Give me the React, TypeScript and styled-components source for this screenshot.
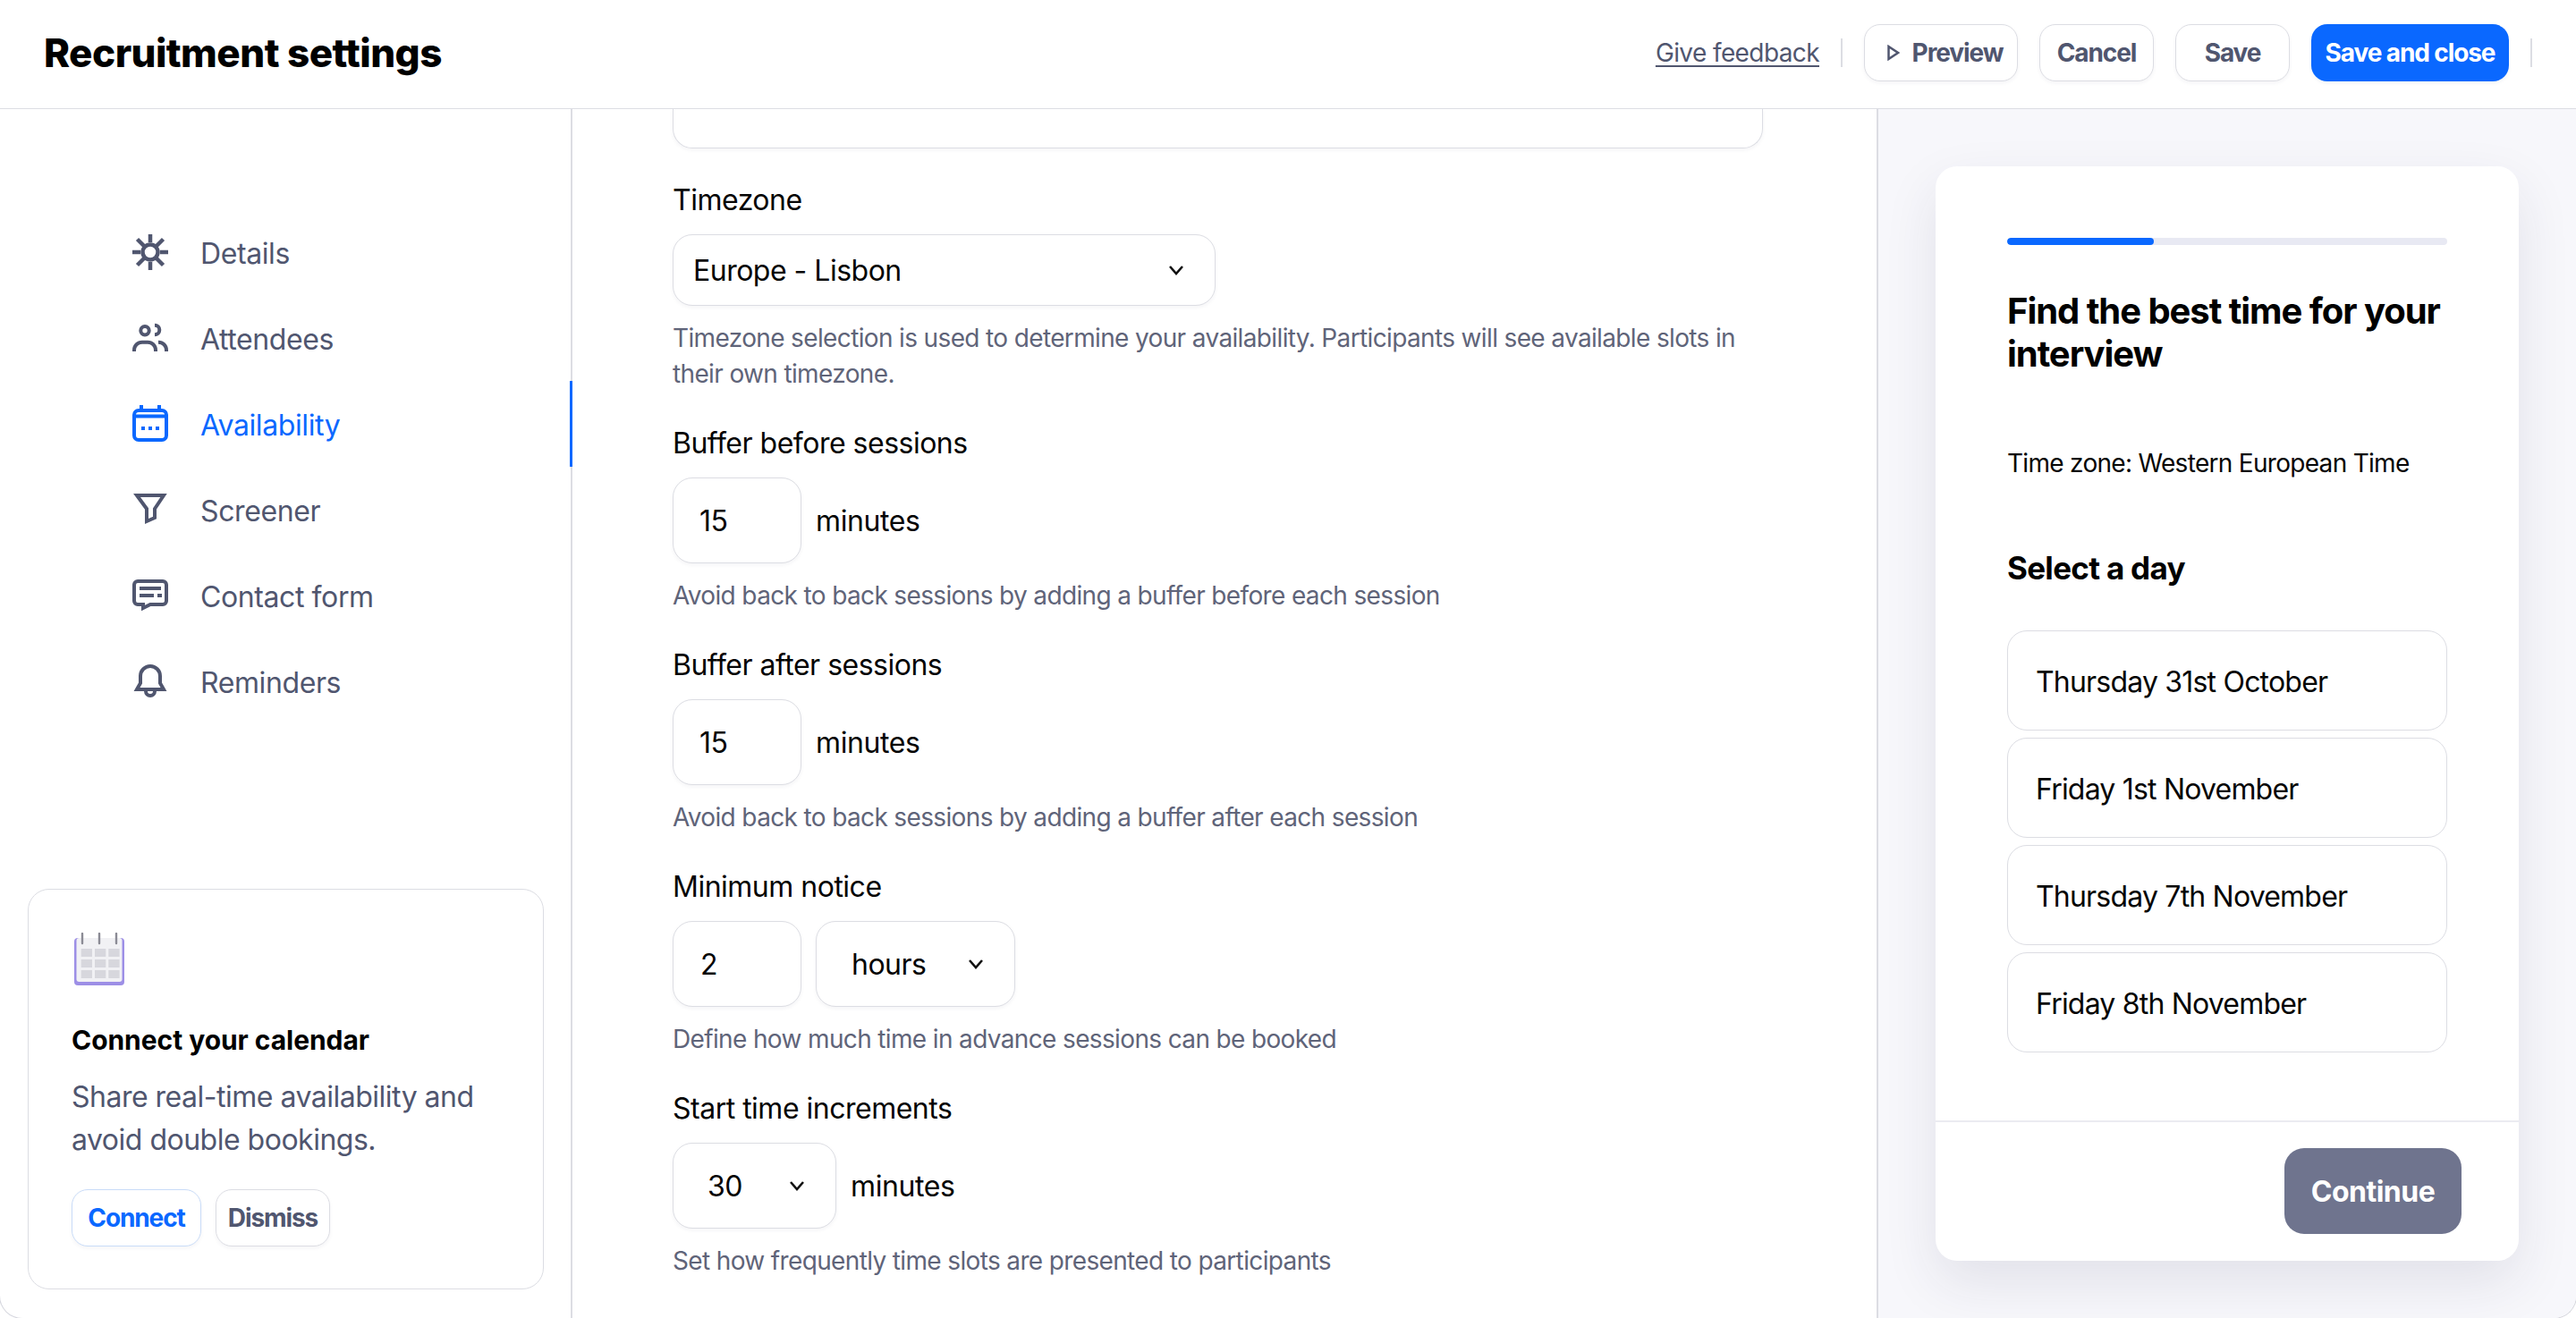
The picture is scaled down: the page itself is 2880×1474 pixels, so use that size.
import * as React from "react";
import styled, { createGlobalStyle } from "styled-components";

const FONT = `Inter, "Liberation Sans", sans-serif`;
const BLUE = "#0a68ff";
const SLATE = "#50566f";
const MUTED = "#5f6479";
const LINE = "#dcdde3";

const GlobalStyle = createGlobalStyle`
  html, body {
    margin: 0;
    height: 100%;
    overflow: hidden;
    background: #fff;
  }
  * {
    box-sizing: border-box;
  }
  body {
    font-family: ${FONT};
    color: #050505;
  }
`;

const Frame = styled.div`
  display: flex;
  flex-direction: column;
  height: calc(100vh + 1px);
  margin: 0 -1px;
  border: 1px solid #d6d7de;
  border-top: 0;
  border-radius: 0 0 26px 26px;
  overflow: hidden;
  background: #fff;
`;

const Header = styled.header`
  flex: none;
  display: flex;
  align-items: center;
  height: 122px;
  padding: 0 25px 4px 49px;
  border-bottom: 1px solid ${LINE};
`;

const Title = styled.h1`
  flex: 1;
  margin: 0;
  font-size: 44px;
  line-height: 56px;
  font-weight: 800;
  letter-spacing: -0.55px;
  color: #000;
`;

const FeedbackLink = styled.a`
  font-size: 28px;
  line-height: 36px;
  color: ${SLATE};
  text-decoration: underline;
  text-underline-offset: 4px;
  letter-spacing: -0.6px;
`;

const Divider = styled.span`
  width: 2px;
  height: 32px;
  margin: 0 24px;
  background: ${LINE};
`;

const Button = styled.button<{ $primary?: boolean; $w: number }>`
  display: flex;
  align-items: center;
  justify-content: center;
  gap: 14px;
  width: ${(p) => p.$w}px;
  height: 64px;
  padding: 0;
  border: ${(p) => (p.$primary ? "0" : `1.5px solid ${LINE}`)};
  border-radius: 18px;
  background: ${(p) => (p.$primary ? BLUE : "#fff")};
  box-shadow: 0 2px 4px rgba(40, 44, 80, 0.05);
  color: ${(p) => (p.$primary ? "#fff" : SLATE)};
  font-family: ${FONT};
  font-size: 28px;
  font-weight: 700;
  letter-spacing: -1.1px;
`;

const PreviewButton = styled(Button)`
  padding-left: 9px;
`;

const HeaderActions = styled.div`
  display: flex;
  align-items: center;
  gap: 24px;
`;

const Body = styled.div`
  flex: 1;
  display: flex;
  min-height: 0;
`;

const Sidebar = styled.aside`
  flex: none;
  display: flex;
  flex-direction: column;
  width: 640px;
  padding-top: 112px;
  border-right: 2px solid ${LINE};
`;

const NavList = styled.nav`
  display: flex;
  flex-direction: column;
`;

const NavRow = styled.a<{ $active?: boolean }>`
  position: relative;
  display: flex;
  align-items: center;
  gap: 36px;
  height: 96px;
  padding-left: 148px;
  font-size: 32px;
  letter-spacing: -0.4px;
  color: ${(p) => (p.$active ? BLUE : SLATE)};

  ${(p) =>
    p.$active &&
    `&::after {
      content: "";
      position: absolute;
      top: 0;
      right: -2px;
      bottom: 0;
      width: 3px;
      background: ${BLUE};
    }`}
`;

const NavLabel = styled.span`
  padding-top: 2px;
`;

const NavIcon = styled.svg`
  flex: none;
  width: 40px;
  height: 40px;
  overflow: visible;
  fill: none;
  stroke: currentColor;
  stroke-width: 4;
`;

const Callout = styled.section`
  margin: auto 30px 32px 31px;
  padding: 48px 48px 47px;
  border: 1.5px solid ${LINE};
  border-radius: 24px;
`;

const CalloutTitle = styled.h3`
  margin: 36px 0 20px;
  font-size: 30px;
  line-height: 40px;
  font-weight: 700;
  letter-spacing: -0.05px;
  color: #000;
`;

const CalloutText = styled.p`
  margin: 0;
  font-size: 32px;
  line-height: 48px;
  letter-spacing: -0.5px;
  color: ${SLATE};
`;

const CalloutActions = styled.div`
  display: flex;
  gap: 16px;
  margin-top: 31px;
`;

const LinkButton = styled(Button)<{ $accent?: boolean }>`
  color: ${(p) => (p.$accent ? BLUE : SLATE)};
  border-color: ${(p) => (p.$accent ? "#c9dcf8" : LINE)};
`;

const FormPane = styled.main`
  flex: none;
  width: 1460px;
  padding-left: 112px;
  border-right: 2px solid ${LINE};
  overflow: hidden;
`;

const ClippedBox = styled.div`
  width: 1219px;
  height: 44px;
  margin-bottom: 38px;
  border: 1.5px solid ${LINE};
  border-top: 0;
  border-radius: 0 0 22px 22px;
  box-shadow: 0 2px 4px rgba(40, 44, 80, 0.05);
`;

const Field = styled.div`
  margin-bottom: 38px;
`;

const Label = styled.div`
  height: 40px;
  margin-bottom: 18px;
  font-size: 32px;
  line-height: 40px;
  letter-spacing: -0.5px;
  color: #050505;
`;

const Help = styled.p`
  width: 1195px;
  margin: 16px 0 0;
  font-size: 28px;
  line-height: 40px;
  letter-spacing: -0.64px;
  color: ${MUTED};
`;

const Controls = styled.div`
  display: flex;
  align-items: center;
  gap: 16px;
  height: 96px;
  font-size: 32px;
  letter-spacing: -0.4px;
`;

const Input = styled.div<{ $w: number; $tall?: boolean; $pad: number }>`
  display: flex;
  align-items: center;
  justify-content: space-between;
  flex: none;
  width: ${(p) => p.$w}px;
  height: ${(p) => (p.$tall ? 96 : 80)}px;
  padding: 0 33px 0 ${(p) => p.$pad}px;
  border: 1.5px solid ${LINE};
  border-radius: 22px;
  background: #fff;
  box-shadow: 0 2px 4px rgba(40, 44, 80, 0.05);
  font-size: 32px;
  letter-spacing: -0.5px;
  color: #050505;
`;

const Chevron = styled.svg`
  flex: none;
  width: 20px;
  height: 14px;
  fill: none;
  stroke: #111;
  stroke-width: 2.6;
`;

const Preview = styled.aside`
  flex: 1;
  padding: 64px 0 0 64px;
  background: #f7f7fb;
`;

const Card = styled.div`
  display: flex;
  flex-direction: column;
  width: 652px;
  height: 1224px;
  border-radius: 24px;
  background: #fff;
  box-shadow: 0 24px 60px rgba(40, 44, 80, 0.1);
`;

const CardBody = styled.div`
  flex: 1;
  padding: 80px 80px 0;
`;

const Track = styled.div`
  height: 8px;
  margin-bottom: 50px;
  border-radius: 4px;
  background: #e8e9f3;
  overflow: hidden;
`;

const Fill = styled.div`
  width: 164px;
  height: 100%;
  border-radius: 4px;
  background: ${BLUE};
`;

const CardHeading = styled.h2`
  margin: 0 0 78px;
  font-size: 40px;
  line-height: 48px;
  font-weight: 700;
  letter-spacing: -1.05px;
  color: #000;
`;

const ZoneText = styled.p`
  margin: 0 0 73px;
  font-size: 28px;
  line-height: 40px;
  letter-spacing: -0.7px;
`;

const DayHeading = styled.h3`
  margin: 0 0 46px;
  font-size: 35px;
  line-height: 48px;
  font-weight: 700;
  letter-spacing: -0.7px;
  color: #000;
`;

const DayList = styled.div`
  display: flex;
  flex-direction: column;
  gap: 8px;
`;

const DayOption = styled.div`
  display: flex;
  align-items: center;
  height: 112px;
  padding: 2px 0 0 31px;
  border: 1.5px solid ${LINE};
  border-radius: 22px;
  font-size: 32px;
  letter-spacing: -0.8px;
`;

const CardFooter = styled.div`
  display: flex;
  justify-content: flex-end;
  height: 157px;
  padding: 29px 64px 0 0;
  border-top: 2px solid #ebebf1;
`;

const ContinueButton = styled.button`
  width: 198px;
  height: 96px;
  border: 0;
  border-radius: 22px;
  background: #6f748e;
  color: #fff;
  font-family: ${FONT};
  font-size: 32px;
  font-weight: 700;
  letter-spacing: -0.5px;
`;

const ChevronDown = () => (
  <Chevron viewBox="0 0 20 14">
    <path d="M3 3l7 8 7-8" />
  </Chevron>
);

const navItems = [
  {
    label: "Details",
    icon: (
      <>
        <circle cx="20" cy="20" r="8.5" strokeWidth="4.5" />
        <path
          strokeWidth="4.5"
          d="M20 0v9M20 31v9M0 20h9M31 20h9M5.5 5.5l7.5 7.5M27 27l7.5 7.5M34.5 5.5L27 13M13 27l-7.5 7.5"
        />
      </>
    ),
  },
  {
    label: "Attendees",
    icon: (
      <>
        <circle cx="14" cy="11.7" r="4.7" />
        <path d="M25 5.7a5.3 5.3 0 0 1 0 10.6M2 35v-1.5a8.8 8.8 0 0 1 8.8-8.8h6.4a8.8 8.8 0 0 1 8.8 8.8V35M29 24.7h.2a8.8 8.8 0 0 1 8.8 8.8V35" />
      </>
    ),
  },
  {
    label: "Availability",
    active: true,
    icon: (
      <>
        <rect x="2" y="5" width="36" height="33" rx="5" />
        <path d="M2 11.5h36M10-1v6M30-1v6M10 25h4M18 25h4M26 25h4" />
      </>
    ),
  },
  {
    label: "Screener",
    icon: <path d="M5 4h30L25 19v10l-9 4V19z" />,
  },
  {
    label: "Contact form",
    icon: (
      <>
        <path d="M6 4h28a4 4 0 0 1 4 4v18a4 4 0 0 1-4 4H20l-8 4v-4H6a4 4 0 0 1-4-4V8a4 4 0 0 1 4-4z" />
        <path d="M8 12h24M8 20h16M28 20h5" />
      </>
    ),
  },
  {
    label: "Reminders",
    icon: (
      <>
        <path d="M5 29l4-7V14a11 11 0 0 1 22 0v8l4 7z" />
        <path d="M15 31a5 5 0 0 0 10 0" />
      </>
    ),
  },
];

const CalendarArt = () => (
  <svg width="60" height="60" viewBox="0 0 60 60" style={{ marginLeft: 2 }}>
    <rect x="1" y="6" width="56" height="53" rx="4" fill="#9d8fe6" />
    <rect x="3.5" y="6" width="51" height="49" rx="3" fill="#f1f1f4" />
    {[0, 1, 2].map((row) =>
      [0, 1, 2].map((col) => (
        <rect
          key={`${row}-${col}`}
          x={8.7 + col * 15.3}
          y={18 + row * 12}
          width="12.3"
          height="9"
          fill="#d7d7dd"
        />
      ))
    )}
    {[10, 29, 48].map((x) => (
      <path key={x} d={`M${x} 1v11`} stroke="#8b8b95" strokeWidth="2.4" strokeLinecap="round" />
    ))}
  </svg>
);

export default function App() {
  return (
    <Frame>
      <GlobalStyle />
      <Header>
        <Title>Recruitment settings</Title>
        <FeedbackLink>Give feedback</FeedbackLink>
        <Divider />
        <HeaderActions>
          <PreviewButton $w={172}>
            <svg width="14" height="18" viewBox="0 0 14 18" fill="none" stroke={SLATE} strokeWidth="2.5">
              <path d="M1.5 2l10.5 7-10.5 7z" />
            </svg>
            Preview
          </PreviewButton>
          <Button $w={128}>Cancel</Button>
          <Button $w={128}>Save</Button>
          <Button $primary $w={221}>Save and close</Button>
        </HeaderActions>
        <Divider />
      </Header>
      <Body>
        <Sidebar>
          <NavList>
            {navItems.map((item) => (
              <NavRow key={item.label} $active={item.active}>
                <NavIcon viewBox="0 0 40 40">{item.icon}</NavIcon>
                <NavLabel>{item.label}</NavLabel>
              </NavRow>
            ))}
          </NavList>
          <Callout>
            <CalendarArt />
            <CalloutTitle>Connect your calendar</CalloutTitle>
            <CalloutText>Share real-time availability and avoid double bookings.</CalloutText>
            <CalloutActions>
              <LinkButton $accent $w={145}>Connect</LinkButton>
              <LinkButton $w={128}>Dismiss</LinkButton>
            </CalloutActions>
          </Callout>
        </Sidebar>
        <FormPane>
          <ClippedBox />
          <Field>
            <Label>Timezone</Label>
            <Input $w={607} $pad={22}>
              Europe - Lisbon
              <ChevronDown />
            </Input>
            <Help>
              Timezone selection is used to determine your availability. Participants will see available slots in their
              own timezone.
            </Help>
          </Field>
          <Field>
            <Label>Buffer before sessions</Label>
            <Controls>
              <Input $tall $w={144} $pad={29}>15</Input>
              minutes
            </Controls>
            <Help>Avoid back to back sessions by adding a buffer before each session</Help>
          </Field>
          <Field>
            <Label>Buffer after sessions</Label>
            <Controls>
              <Input $tall $w={144} $pad={29}>15</Input>
              minutes
            </Controls>
            <Help>Avoid back to back sessions by adding a buffer after each session</Help>
          </Field>
          <Field>
            <Label>Minimum notice</Label>
            <Controls>
              <Input $tall $w={144} $pad={30}>2</Input>
              <Input $tall $w={223} $pad={39}>
                hours
                <ChevronDown />
              </Input>
            </Controls>
            <Help>Define how much time in advance sessions can be booked</Help>
          </Field>
          <Field>
            <Label>Start time increments</Label>
            <Controls>
              <Input $tall $w={183} $pad={38}>
                30
                <ChevronDown />
              </Input>
              minutes
            </Controls>
            <Help>Set how frequently time slots are presented to participants</Help>
          </Field>
        </FormPane>
        <Preview>
          <Card>
            <CardBody>
              <Track>
                <Fill />
              </Track>
              <CardHeading>Find the best time for your interview</CardHeading>
              <ZoneText>Time zone: Western European Time</ZoneText>
              <DayHeading>Select a day</DayHeading>
              <DayList>
                <DayOption>Thursday 31st October</DayOption>
                <DayOption>Friday 1st November</DayOption>
                <DayOption>Thursday 7th November</DayOption>
                <DayOption>Friday 8th November</DayOption>
              </DayList>
            </CardBody>
            <CardFooter>
              <ContinueButton>Continue</ContinueButton>
            </CardFooter>
          </Card>
        </Preview>
      </Body>
    </Frame>
  );
}
